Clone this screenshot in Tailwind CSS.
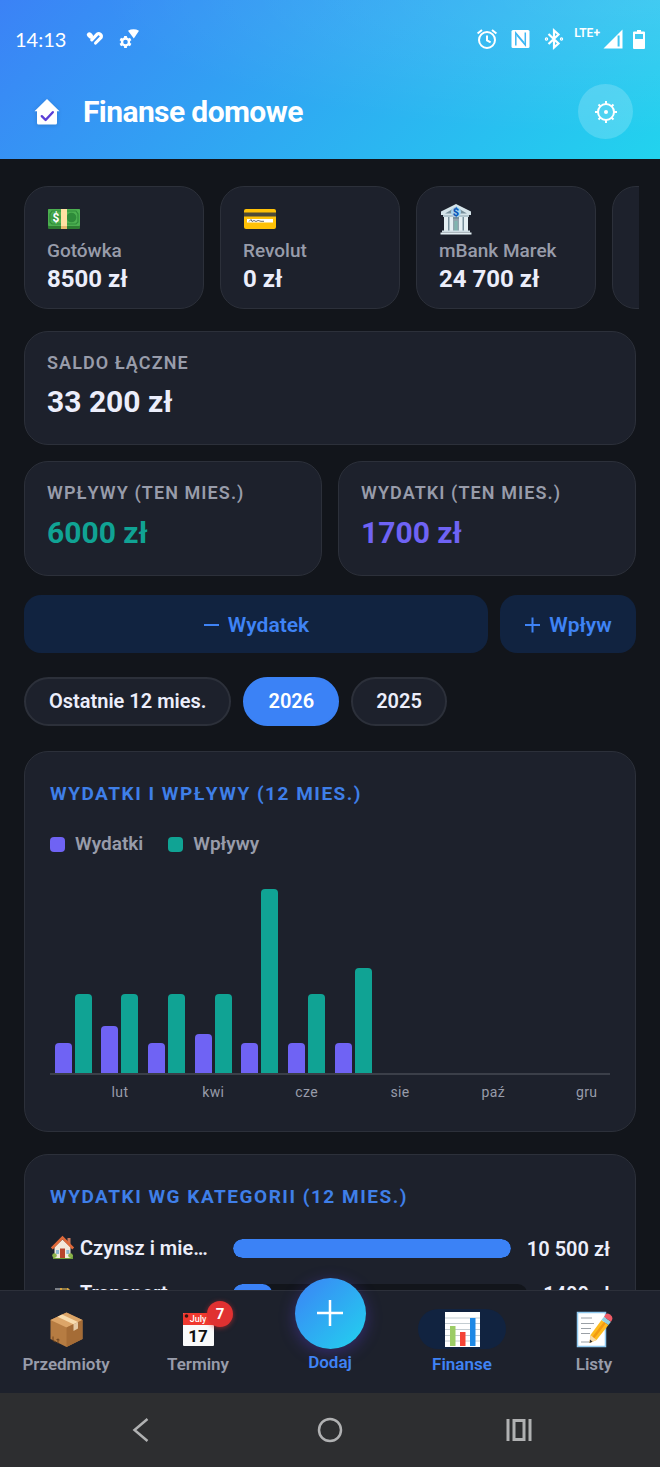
<!DOCTYPE html>
<html lang="pl">
<head>
<meta charset="utf-8">
<meta name="viewport" content="width=device-width, initial-scale=1">
<title>Finanse domowe</title>
<script src="https://cdn.jsdelivr.net/npm/@tailwindcss/browser@4"></script>
</head>
<body class="flex h-dvh flex-col overflow-hidden bg-[#12151b] font-[Roboto,sans-serif] text-[#eceefb]">

<header class="shrink-0 bg-[radial-gradient(ellipse_at_top_right,rgba(255,255,255,0.12),transparent_60%),linear-gradient(135deg,#3b82f6,#22d3ee)] text-white">
  <!-- Status bar -->
  <div class="flex h-[77px] items-center px-[15px]">
    <span class="w-[70px] font-[Lato,sans-serif] text-[20px]">14:13</span>
    <svg class="mr-[14px] h-[20px] w-[20px]" viewBox="0 0 20 20" fill="none" stroke="#fff" stroke-linecap="round">
      <path d="M4.300 5.800L5.600 7.100" stroke-width="5"/>
      <path d="M6.800 10.800L12.200 5.200A2.700 2.700 0 0 1 16.200 8.300L10.600 14" stroke-width="3.200" stroke-linejoin="round"/>
    </svg>
    <svg class="h-[20px] w-[22px]" viewBox="0 0 22 20">
      <path fill="#fff" d="M9 1.700 Q14.500 -1.200 20 1.700 L14.800 9.600 Z"/>
      <circle cx="6.500" cy="13" r="3.500" fill="none" stroke="#fff" stroke-width="2.400"/>
      <path d="M6.500 7V9.500M6.500 16.500V19M1.300 10l2.200 1.300M9.500 14.700l2.200 1.300M1.300 16l2.200-1.300M9.500 11.300l2.200-1.300" stroke="#fff" stroke-width="2.800"/>
    </svg>
    <div class="ml-auto flex items-center">
      <svg class="mr-[13px] h-[22px] w-[22px]" viewBox="0 0 22 22" fill="none" stroke="#fff" stroke-width="2">
        <circle cx="11" cy="12" r="8"/><path d="M11 7.500V12.500L14.600 14.400M1.600 5.600L6 1.900M20.400 5.600L16 1.900"/>
      </svg>
      <svg class="mr-[14px] h-[20px] w-[19px]" viewBox="0 0 19 20">
        <rect x="0.500" y="1" width="18" height="18" rx="1.500" fill="#fff"/>
        <path d="M4.800 16.500V4L12.800 13.500M14.300 3.500V16L6.300 6.500" fill="none" stroke="#3db7f3" stroke-width="1.500"/>
      </svg>
      <svg class="mr-[10px] h-[22px] w-[20px]" viewBox="0 0 20 22" fill="none" stroke="#fff" stroke-width="2.200">
        <path d="M4.500 6L14.500 15.500L10 19.500V2.500L14.500 6.500L4.500 16"/>
        <circle cx="2.500" cy="11" r="0.600"/><circle cx="17.500" cy="11" r="0.600"/>
      </svg>
      <span class="mb-[12px] mr-[3px] text-[12px] font-semibold leading-[12px]">LTE+</span>
      <svg class="mr-[10px] h-[20px] w-[20px]" viewBox="0 0 20 20">
        <path d="M0.500 19.500L19.500 0.500V19.500Z" fill="#fff"/><path d="M15.600 6.500V17.500" stroke="#3fc4f1" stroke-width="2"/>
      </svg>
      <svg class="h-[20px] w-[12px]" viewBox="0 0 12 20">
        <path d="M4 1h4v1.500h3a1 1 0 0 1 1 1V19a1 1 0 0 1-1 1H1a1 1 0 0 1-1-1V3.500a1 1 0 0 1 1-1h3Z" fill="#fff"/>
        <rect x="2" y="5" width="8" height="5" fill="#41c9f1"/>
      </svg>
    </div>
  </div>
  <!-- App bar -->
  <div class="flex items-center pb-[20px] pl-[33px] pr-[27px] pt-[7px]">
    <svg class="mr-[22px] h-[28px] w-[28px] drop-shadow-sm" viewBox="0 0 28 28">
      <path d="M14 1L26.500 13.200H24V25a1.500 1.500 0 0 1-1.500 1.500h-17A1.500 1.500 0 0 1 4 25V13.200H1.500Z" fill="#fff"/>
      <path d="M8.800 18.200L12.600 22L19.800 14.200" fill="none" stroke="#5b3fd6" stroke-width="2.400" stroke-linecap="round" stroke-linejoin="round"/>
    </svg>
    <h1 class="text-[30px] font-bold tracking-[-0.02em]">Finanse domowe</h1>
    <button type="button" aria-label="Ustawienia" class="ml-auto flex size-[55px] items-center justify-center rounded-full bg-white/18">
      <svg class="size-[24px]" viewBox="0 0 24 24" fill="none" stroke="#fff" stroke-width="2">
        <circle cx="12" cy="12" r="8"/><circle cx="12" cy="12" r="2" fill="#fff" stroke="none"/>
        <path d="M12 4V1M12 23v-3M4 12H1M23 12h-3M6.300 6.300L4.500 4.500M19.500 19.500l-1.800-1.800M6.300 17.700l-1.800 1.800M19.500 4.500l-1.800 1.800"/>
      </svg>
    </button>
  </div>
</header>

<main class="flex min-h-0 flex-1 flex-col overflow-y-auto px-6 pt-[27px] [scrollbar-width:none]">

  <!-- Accounts -->
  <section class="-mr-[3px] flex shrink-0 gap-4 overflow-hidden" aria-label="Konta">
    <article class="flex h-[123px] w-[180px] shrink-0 flex-col rounded-[24px] border border-[#2c303a] bg-[#1d212c] px-[22px] pt-[15px]">
      <svg class="mb-[2px] size-[34px]" viewBox="0 0 34 34">
        <rect x="1" y="7" width="32" height="20" rx="1" fill="#2e7d32"/><rect x="1" y="7" width="32" height="17" rx="1" fill="#4caf50"/>
        <path d="M5 9h24l2 3v8l-2 2H5l-2-2v-8Z" fill="none" stroke="#2e8b3a" stroke-width="1.200"/>
        <circle cx="9" cy="15.500" r="4.800" fill="#3b9a42"/><circle cx="24.500" cy="15.500" r="4.800" fill="#2e8b3a"/>
        <text x="9" y="20" text-anchor="middle" font-family="Roboto" font-size="12" font-weight="700" fill="#fff">$</text>
        <rect x="14" y="7" width="6" height="17" fill="#ffe0a3"/><rect x="14" y="24" width="6" height="3" fill="#e6b96f"/>
      </svg>
      <span class="text-[19px] font-medium leading-[26px] text-[#989caa]">Gotówka</span>
      <span class="text-[24px] font-bold leading-[30px]">8500 zł</span>
    </article>
    <article class="flex h-[123px] w-[180px] shrink-0 flex-col rounded-[24px] border border-[#2c303a] bg-[#1d212c] px-[22px] pt-[15px]">
      <svg class="mb-[2px] size-[34px]" viewBox="0 0 34 34">
        <rect x="1" y="7" width="32" height="20" rx="2" fill="#ffc107"/><rect x="1" y="10.500" width="32" height="4" fill="#4e4a36"/>
        <rect x="4" y="17" width="26" height="3.500" fill="#fff"/><path d="M6 19.500l2-2 1 2 2-1 2 1 2-1 3 .800h3" fill="none" stroke="#444" stroke-width=".8"/>
      </svg>
      <span class="text-[19px] font-medium leading-[26px] text-[#989caa]">Revolut</span>
      <span class="text-[24px] font-bold leading-[30px]">0 zł</span>
    </article>
    <article class="flex h-[123px] w-[180px] shrink-0 flex-col rounded-[24px] border border-[#2c303a] bg-[#1d212c] px-[22px] pt-[15px]">
      <svg class="mb-[2px] size-[34px]" viewBox="0 0 34 34">
        <path d="M17 2L32 9.500V13H2V9.500Z" fill="#d5e4ea"/><path d="M17 5L28 11.500H6Z" fill="#78909c"/>
        <rect x="4" y="13" width="26" height="2" fill="#b0c4cd"/><rect x="5" y="15" width="24" height="14" fill="#78909c"/>
        <path d="M5 15h4v14H5ZM10.500 15h3.500v14h-3.500ZM20 15h3.500v14H20ZM25 15h4v14h-4Z" fill="#e4eff3"/>
        <rect x="14" y="17" width="6" height="12" fill="#90a4ae"/><rect x="15.500" y="19" width="3" height="10" fill="#7fb5b0"/>
        <rect x="3" y="28.500" width="28" height="2" fill="#cfdde3"/><rect x="1.500" y="30.500" width="31" height="2" fill="#e4eff3"/>
        <circle cx="17" cy="10" r="5" fill="#a9d5ee"/>
        <text x="17" y="14" text-anchor="middle" font-family="Roboto" font-size="11" font-weight="900" fill="#0b57b8">$</text>
      </svg>
      <span class="text-[19px] font-medium leading-[26px] text-[#989caa]">mBank Marek</span>
      <span class="text-[24px] font-bold leading-[30px]">24 700 zł</span>
    </article>
    <article class="h-[123px] w-[180px] shrink-0 rounded-[24px] border border-[#2c303a] bg-[#1d212c]"></article>
  </section>

  <!-- Totals -->
  <section class="mt-[22px] shrink-0 rounded-[24px] border border-[#2c303a] bg-[#1d212c] px-[22px] pb-[22px] pt-[18px]">
    <h2 class="text-[18px] font-semibold leading-[26px] tracking-[0.06em] text-[#989caa]">SALDO ŁĄCZNE</h2>
    <p class="mt-[6px] text-[30px] font-bold leading-[40px]">33 200 zł</p>
  </section>
  <div class="mt-4 grid shrink-0 grid-cols-2 gap-4">
    <section class="rounded-[24px] border border-[#2c303a] bg-[#1d212c] px-[22px] pb-[22px] pt-[18px]">
      <h2 class="text-[18px] font-semibold leading-[26px] tracking-[0.06em] text-[#989caa]">WPŁYWY (TEN MIES.)</h2>
      <p class="mt-[7px] text-[30px] font-bold leading-[40px] text-[#10a394]">6000 zł</p>
    </section>
    <section class="rounded-[24px] border border-[#2c303a] bg-[#1d212c] px-[22px] pb-[22px] pt-[18px]">
      <h2 class="text-[18px] font-semibold leading-[26px] tracking-[0.06em] text-[#989caa]">WYDATKI (TEN MIES.)</h2>
      <p class="mt-[7px] text-[30px] font-bold leading-[40px] text-[#6f63f4]">1700 zł</p>
    </section>
  </div>

  <!-- Actions -->
  <div class="mt-[19px] flex shrink-0 gap-3 text-[21px] font-semibold text-[#3f83f5]">
    <button type="button" class="flex h-[58px] flex-1 items-center justify-center gap-2 rounded-[17px] bg-[#112340] pt-[4px]">
      <svg class="size-[17px]" viewBox="0 0 17 17" stroke="currentColor" stroke-width="2"><path d="M1 7h15"/></svg>Wydatek
    </button>
    <button type="button" class="flex h-[58px] w-[136px] items-center justify-center gap-2 rounded-[17px] bg-[#112340] pt-[4px]">
      <svg class="size-[17px] overflow-visible" viewBox="0 0 17 17" stroke="currentColor" stroke-width="2"><path d="M1 7h15M8.500 -.500v15"/></svg>Wpływ
    </button>
  </div>

  <!-- Period -->
  <div class="mt-6 flex shrink-0 gap-3 text-[20px] font-semibold">
    <button type="button" class="h-[49px] rounded-full border-2 border-[#2c303a] bg-[#1d212c] px-[23px] pb-[2px]">Ostatnie 12 mies.</button>
    <button type="button" aria-pressed="true" class="h-[49px] rounded-full border-2 border-[#3b82f6] bg-[#3b82f6] px-[23px] pb-[2px] text-white">2026</button>
    <button type="button" class="h-[49px] rounded-full border-2 border-[#2c303a] bg-[#1d212c] px-[23px] pb-[2px]">2025</button>
  </div>

  <!-- Monthly chart -->
  <section class="mt-[25px] shrink-0 rounded-[24px] border border-[#2c303a] bg-[#1d212c] px-[25px] pb-[28px] pt-[28px]">
    <h2 class="text-[19px] font-bold leading-[28px] tracking-[0.08em] text-[#3f7fe8]">WYDATKI I WPŁYWY (12 MIES.)</h2>
    <ul class="mt-[22px] flex gap-[25px] text-[19px] font-semibold leading-[28px] text-[#989caa]">
      <li class="flex items-center gap-[10px]"><span class="size-[15px] rounded-[4px] bg-[#6f63f4]"></span>Wydatki</li>
      <li class="flex items-center gap-[10px]"><span class="size-[15px] rounded-[4px] bg-[#10a394]"></span>Wpływy</li>
    </ul>
    <div class="mt-[20px] grid h-[197px] grid-cols-12 border-b-2 border-[#3b3f49]">
      <div class="flex items-end justify-center gap-[3px]"><i class="w-[17px] rounded-t-[4px] bg-[#6f63f4]" style="height:30px"></i><i class="w-[17px] rounded-t-[4px] bg-[#10a394]" style="height:79px"></i></div>
      <div class="flex items-end justify-center gap-[3px]"><i class="w-[17px] rounded-t-[4px] bg-[#6f63f4]" style="height:47px"></i><i class="w-[17px] rounded-t-[4px] bg-[#10a394]" style="height:79px"></i></div>
      <div class="flex items-end justify-center gap-[3px]"><i class="w-[17px] rounded-t-[4px] bg-[#6f63f4]" style="height:30px"></i><i class="w-[17px] rounded-t-[4px] bg-[#10a394]" style="height:79px"></i></div>
      <div class="flex items-end justify-center gap-[3px]"><i class="w-[17px] rounded-t-[4px] bg-[#6f63f4]" style="height:39px"></i><i class="w-[17px] rounded-t-[4px] bg-[#10a394]" style="height:79px"></i></div>
      <div class="flex items-end justify-center gap-[3px]"><i class="w-[17px] rounded-t-[4px] bg-[#6f63f4]" style="height:30px"></i><i class="w-[17px] rounded-t-[4px] bg-[#10a394]" style="height:184px"></i></div>
      <div class="flex items-end justify-center gap-[3px]"><i class="w-[17px] rounded-t-[4px] bg-[#6f63f4]" style="height:30px"></i><i class="w-[17px] rounded-t-[4px] bg-[#10a394]" style="height:79px"></i></div>
      <div class="flex items-end justify-center gap-[3px]"><i class="w-[17px] rounded-t-[4px] bg-[#6f63f4]" style="height:30px"></i><i class="w-[17px] rounded-t-[4px] bg-[#10a394]" style="height:105px"></i></div>
    </div>
    <div class="mt-[6px] grid grid-cols-12 text-center text-[14px] leading-[22px] tracking-wide text-[#989caa]">
      <span class="col-start-2">lut</span><span class="col-start-4">kwi</span><span class="col-start-6">cze</span><span class="col-start-8">sie</span><span class="col-start-10">paź</span><span class="col-start-12">gru</span>
    </div>
  </section>

  <!-- Categories -->
  <section class="mt-[22px] shrink-0 rounded-[24px] border border-[#2c303a] bg-[#1d212c] px-[25px] pb-[26px] pt-[28px]">
    <h2 class="text-[19px] font-bold leading-[28px] tracking-[0.08em] text-[#3f7fe8]">WYDATKI WG KATEGORII (12 MIES.)</h2>
    <ul class="mt-[23px] flex flex-col gap-[16px]">
      <li class="flex h-[29px] items-center gap-4">
        <span class="flex w-[167px] items-center gap-[5px] pb-[2px] text-[20px] font-semibold">
          <svg class="size-[25px]" viewBox="0 0 25 25">
            <path d="M3 20h20v4H3Z" fill="#6b9b3a"/><path d="M4.500 12L12.500 4.500L20.500 12V23h-16Z" fill="#f3e9dc"/>
            <rect x="17.500" y="3" width="3" height="6" fill="#c9785b"/>
            <path d="M1.800 13.500L12.500 2.500L23.200 13.500" fill="none" stroke="#e0693a" stroke-width="2.600"/>
            <rect x="10" y="13.500" width="5" height="9.500" fill="#b8452c"/><rect x="6" y="15" width="3" height="4" fill="#8fb9d0"/><rect x="16.300" y="15" width="3" height="4" fill="#8fb9d0"/>
            <circle cx="4.500" cy="20.500" r="2.300" fill="#8bb34a"/><circle cx="20.500" cy="20.500" r="2.300" fill="#8bb34a"/>
          </svg>Czynsz i mie…</span>
        <span class="h-[19px] flex-1 overflow-hidden rounded-full bg-[#12151b]"><span class="block h-full rounded-full bg-[#3b82f6]" style="width:100%"></span></span>
        <span class="text-[20px] font-semibold">10 500 zł</span>
      </li>
      <li class="flex h-[29px] items-center gap-4">
        <span class="flex w-[167px] items-center gap-[5px] pb-[2px] text-[20px] font-semibold">
          <svg class="size-[25px]" viewBox="0 0 25 25">
            <path d="M4 11L6.500 8H18l3 3v8H4Z" fill="#d9a441"/><rect x="5" y="8" width="5" height="4" fill="#7b7f86"/><rect x="12" y="8" width="5" height="4" fill="#8c7a4a"/>
            <circle cx="8" cy="19" r="2.500" fill="#444"/><circle cx="17.500" cy="19" r="2.500" fill="#444"/>
          </svg>Transport</span>
        <span class="h-[19px] flex-1 overflow-hidden rounded-full bg-[#12151b]"><span class="block h-full rounded-full bg-[#3b82f6]" style="width:13.3%"></span></span>
        <span class="text-[20px] font-semibold">1400 zł</span>
      </li>
    </ul>
  </section>
</main>

<!-- Tab bar -->
<nav class="relative z-10 grid h-[103px] shrink-0 grid-cols-5 border-t border-[#2c303a] bg-[#1d212c] pt-[18px] text-[17px] font-semibold text-[#989caa]">
  <a href="#przedmioty" class="flex flex-col items-center gap-[2px]">
    <span class="flex h-[40px] w-[88px] items-center justify-center">
      <svg class="size-[37px]" viewBox="0 0 37 37">
        <path d="M18.500 1.500L34.500 9V28L18.500 36L2.500 28V9Z" fill="#b67c42"/><path d="M18.500 1.500L34.500 9L18.500 16.500L2.500 9Z" fill="#dca568"/>
        <path d="M18.500 16.500L34.500 9V28L18.500 36Z" fill="#a56c36"/>
        <path d="M9.500 5.700L25.500 13.200L30 11.100L14 3.600Z" fill="#f8dcae"/><path d="M25.500 13.200L30 11.100V17.500L25.500 20Z" fill="#e5c9a4"/>
        <path d="M5 25.500v4l3 1.500M10 27.500v5M8.500 28.500l3 .500" fill="none" stroke="#6e4520" stroke-width="1"/>
      </svg></span>
    <span class="leading-[26px]">Przedmioty</span>
  </a>
  <a href="#terminy" class="flex flex-col items-center gap-[2px]">
    <span class="relative flex h-[40px] w-[88px] items-center justify-center">
      <svg class="size-[37px]" viewBox="0 0 37 37">
        <rect x="3" y="2" width="31" height="33" rx="1" fill="#fafafa"/><path d="M3 3a1 1 0 0 1 1-1h29a1 1 0 0 1 1 1v11H3Z" fill="#f0392f"/>
        <circle cx="6.500" cy="5" r="1.800" fill="#3a1512"/><circle cx="30.500" cy="5" r="1.800" fill="#3a1512"/>
        <text x="18" y="11" text-anchor="middle" font-family="Roboto" font-size="9" font-weight="500" fill="#fff">July</text>
        <text x="18" y="31" text-anchor="middle" font-family="Roboto" font-size="17" font-weight="700" fill="#111">17</text>
      </svg>
      <span class="absolute -top-[8px] left-[53px] flex size-[26px] items-center justify-center rounded-full bg-[#e03131] text-[15px] font-bold text-white shadow-[0_1px_5px_rgba(224,49,49,0.6)]">7</span></span>
    <span class="leading-[26px]">Terminy</span>
  </a>
  <a href="#dodaj" class="flex flex-col items-center text-[#3f83f5]">
    <span class="-mt-[31px] flex size-[71px] items-center justify-center rounded-full bg-[linear-gradient(135deg,#3b82f6,#22d3ee)] pb-[2px] shadow-[0_4px_16px_rgba(91,63,214,0.4)]">
      <svg class="size-[28px]" viewBox="0 0 28 28" stroke="#fff" stroke-width="2.500"><path d="M1 14h26M14 1v26"/></svg></span>
    <span class="leading-[26px]">Dodaj</span>
  </a>
  <a href="#finanse" aria-current="page" class="flex flex-col items-center gap-[2px] text-[#3f83f5]">
    <span class="flex h-[40px] w-[88px] items-center justify-center rounded-full bg-[#112340]">
      <svg class="size-[37px]" viewBox="0 0 37 37">
        <rect x="1" y="1" width="35" height="35" fill="#fff"/><path d="M1 7h35M1 12.500h35M1 18.500h35M1 24.500h35M1 30h35" stroke="#c3ccd1" stroke-width="1"/>
        <rect x="6" y="15" width="5.500" height="20" fill="#9ccc65"/><rect x="16" y="21" width="5.500" height="14" fill="#f44336"/><rect x="26" y="7" width="5.500" height="28" fill="#1e88e5"/>
      </svg></span>
    <span class="leading-[26px]">Finanse</span>
  </a>
  <a href="#listy" class="flex flex-col items-center gap-[2px]">
    <span class="flex h-[40px] w-[88px] items-center justify-center">
      <svg class="size-[37px]" viewBox="0 0 37 37">
        <rect x="1.500" y="1.500" width="28" height="34" fill="#fff" stroke="#90caf0" stroke-width="1.500"/>
        <path d="M5 7h11M5 12.500h13M5 17.500h10M5 22.500h9M5 31h8" stroke="#9aa0a6" stroke-width="1.100"/>
        <path d="M25.500 9L32.500 14L20.500 29L13.500 32L14.500 24Z" fill="#fdbb1f"/><path d="M29 11.500L17 27" stroke="#f29a12" stroke-width="2.500"/>
        <path d="M14.500 24L20.500 29L13.500 32Z" fill="#f7d9a6"/><path d="M14 28.500L16.500 30.700L13.500 32Z" fill="#333"/>
        <path d="M25.500 9L28 5.800L35 10.800L32.500 14Z" fill="#8fd0e0"/><path d="M28 5.800L29.500 3.600Q31 1.500 34 3.500Q37.500 6 36 9L35 10.800Z" fill="#ee5a66"/>
      </svg></span>
    <span class="leading-[26px]">Listy</span>
  </a>
</nav>

<!-- System navigation -->
<div class="flex h-[74px] shrink-0 items-center justify-around bg-[#2d2e30] px-[46px] text-[#b0b1b2]">
  <button type="button" aria-label="Wstecz"><svg class="size-[28px]" viewBox="0 0 28 28" fill="none" stroke="currentColor" stroke-width="2.500"><path d="M20.500 3L7.500 14L20.500 25"/></svg></button>
  <button type="button" aria-label="Ekran główny"><svg class="size-[28px]" viewBox="0 0 28 28" fill="none" stroke="currentColor" stroke-width="2.500"><circle cx="14" cy="14" r="11"/></svg></button>
  <button type="button" aria-label="Ostatnie aplikacje"><svg class="size-[28px]" viewBox="0 0 28 28" fill="none" stroke="currentColor" stroke-width="3"><path d="M3 3v22M25 3v22"/><rect x="9" y="4.500" width="10" height="19"/></svg></button>
</div>

</body>
</html>
